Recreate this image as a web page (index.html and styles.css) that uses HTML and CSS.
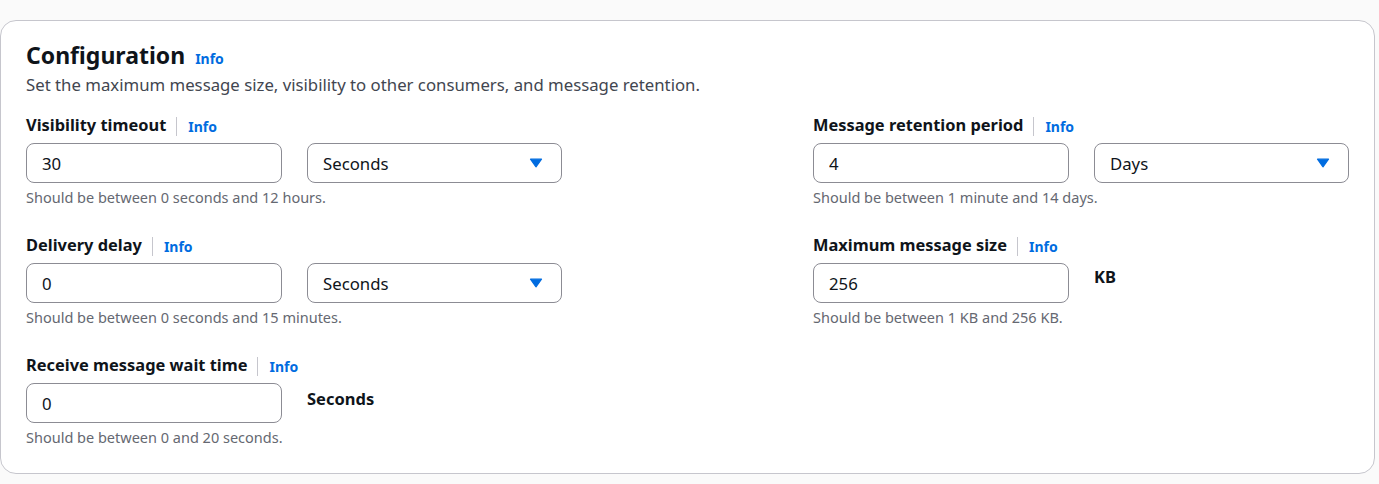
FILE: index.html
```html
<!DOCTYPE html>
<html lang="en">
<head>
<meta charset="utf-8">
<title>Configuration</title>
<link rel="stylesheet" href="styles.css">
</head>
<body>
<section class="container">
  <header class="container-header">
    <h2 class="title">Configuration <a class="info-link" href="#">Info</a></h2>
    <p class="description">Set the maximum message size, visibility to other consumers, and message retention.</p>
  </header>
  <div class="fields">
    <div class="field">
      <div class="field-label"><span class="label-text">Visibility timeout</span><span class="divider"></span><a class="info-link" href="#">Info</a></div>
      <div class="controls">
        <input class="input" type="text" value="30">
        <div class="select"><span>Seconds</span><svg class="caret" width="14" height="10" viewBox="0 0 14 10"><path d="M1.5 1.2h11L7 8.8z" fill="#006ce0" stroke="#006ce0" stroke-width="1.2" stroke-linejoin="round"/></svg></div>
      </div>
      <div class="constraint">Should be between 0 seconds and 12 hours.</div>
    </div>
    <div class="field">
      <div class="field-label"><span class="label-text">Message retention period</span><span class="divider"></span><a class="info-link" href="#">Info</a></div>
      <div class="controls">
        <input class="input" type="text" value="4">
        <div class="select"><span>Days</span><svg class="caret" width="14" height="10" viewBox="0 0 14 10"><path d="M1.5 1.2h11L7 8.8z" fill="#006ce0" stroke="#006ce0" stroke-width="1.2" stroke-linejoin="round"/></svg></div>
      </div>
      <div class="constraint">Should be between 1 minute and 14 days.</div>
    </div>
    <div class="field">
      <div class="field-label"><span class="label-text">Delivery delay</span><span class="divider"></span><a class="info-link" href="#">Info</a></div>
      <div class="controls">
        <input class="input" type="text" value="0">
        <div class="select"><span>Seconds</span><svg class="caret" width="14" height="10" viewBox="0 0 14 10"><path d="M1.5 1.2h11L7 8.8z" fill="#006ce0" stroke="#006ce0" stroke-width="1.2" stroke-linejoin="round"/></svg></div>
      </div>
      <div class="constraint">Should be between 0 seconds and 15 minutes.</div>
    </div>
    <div class="field">
      <div class="field-label"><span class="label-text">Maximum message size</span><span class="divider"></span><a class="info-link" href="#">Info</a></div>
      <div class="controls">
        <input class="input" type="text" value="256">
        <div class="unit unit-kb">KB</div>
      </div>
      <div class="constraint">Should be between 1 KB and 256 KB.</div>
    </div>
    <div class="field">
      <div class="field-label"><span class="label-text">Receive message wait time</span><span class="divider"></span><a class="info-link" href="#">Info</a></div>
      <div class="controls">
        <input class="input" type="text" value="0">
        <div class="unit">Seconds</div>
      </div>
      <div class="constraint">Should be between 0 and 20 seconds.</div>
    </div>
  </div>
</section>
</body>
</html>
```
FILE: styles.css
```css
* { box-sizing: border-box; }

html, body {
  margin: 0;
  background: #fafafa;
}

body {
  padding-top: 20px;
  font-family: "Noto Sans", "Open Sans", sans-serif;
  color: #0f141a;
}

.container {
  margin-right: 4px;
  background: #ffffff;
  border: 1px solid #c6c6cd;
  border-radius: 16px;
  padding: 20px 25px 26px 25px;
}

.title {
  margin: 0;
  display: flex;
  align-items: baseline;
  gap: 10px;
  font-size: 23px;
  line-height: 28px;
  font-weight: 700;
  color: #0f141a;
}

.info-link {
  font-size: 14px;
  font-weight: 700;
  color: #006ce0;
  text-decoration: none;
}

.description {
  margin: 1px 0 0;
  font-size: 16.75px;
  line-height: 22px;
  color: #424650;
}

.fields {
  margin-top: 18px;
  display: grid;
  grid-template-columns: 536px 536px;
  justify-content: space-between;
  row-gap: 27px;
}

.field-label {
  display: flex;
  align-items: center;
  height: 22px;
  margin-bottom: 7px;
}

.label-text {
  font-size: 16.4px;
  line-height: 22px;
  font-weight: 700;
}

.divider {
  width: 1px;
  height: 19px;
  margin: 3px 11px 0 10px;
  background: #c6c6cd;
}

.field-label .info-link {
  margin-top: 3px;
}

.controls {
  display: grid;
  grid-template-columns: 256px 255px;
  column-gap: 25px;
}

.input,
.select {
  height: 40px;
  border: 1px solid #8c8c94;
  border-radius: 8px;
  background: #ffffff;
  padding: 0 15px;
  font-family: "Noto Sans", "Open Sans", sans-serif;
  font-size: 16.75px;
  color: #0f141a;
}

.input {
  width: 256px;
  outline: none;
}

.select {
  display: flex;
  align-items: center;
  justify-content: space-between;
  padding-right: 18px;
}

.caret {
  display: block;
}

.unit {
  padding-top: 5px;
  font-size: 16.5px;
  line-height: 22px;
  font-weight: 700;
}

.unit-kb {
  padding-top: 3px;
}

.constraint {
  margin-top: 4px;
  font-size: 14.5px;
  line-height: 20px;
  color: #656871;
}
```
